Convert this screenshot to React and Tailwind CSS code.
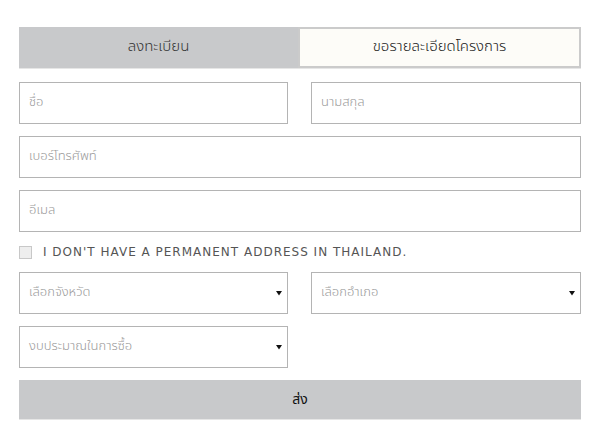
import React from "react";

const font = { fontFamily: '"Noto Sans Thai", "Noto Sans", "Liberation Sans", sans-serif' };

function Field({ label, className = "" }) {
  return (
    <div className={`h-[42px] border border-[#b4b4b4] bg-white flex items-center px-[9px] ${className}`}>
      <span className="text-[13px] font-light text-[#9a9a9a]">{label}</span>
    </div>
  );
}

function Select({ label, className = "" }) {
  return (
    <div className={`h-[42px] border border-[#b4b4b4] bg-white flex items-center justify-between pl-[9px] pr-[5px] ${className}`}>
      <span className="text-[13px] font-light text-[#9a9a9a]">{label}</span>
      <svg width="6" height="6" viewBox="0 0 6 6"><path d="M0 1h6L3 5.5z" fill="#111" /></svg>
    </div>
  );
}

export default function App() {
  return (
    <div className="w-[600px] h-[442px] bg-white pt-[27px] px-[19px]" style={font}>
      <div className="flex h-[42px] border-b border-[#e6e6e6]">
        <div className="flex-1 bg-[#c8c9cb] flex items-center justify-center text-[15px] font-light text-[#333]">ลงทะเบียน</div>
        <div className="flex-1 bg-[#fdfcf8] border-2 border-[#cbcbcb] flex items-center justify-center text-[15px] font-light text-[#222]">ขอรายละเอียดโครงการ</div>
      </div>
      <div className="mt-[13px] flex flex-col gap-[12px]">
        <div className="flex gap-[23px]">
          <Field label="ชื่อ" className="w-[269px]" />
          <Field label="นามสกุล" className="flex-1" />
        </div>
        <Field label="เบอร์โทรศัพท์" />
        <Field label="อีเมล" />
      </div>
      <div className="h-[40px] flex items-center gap-[11px]">
        <div className="w-[13px] h-[13px] border border-[#c8c8c8] bg-[#eeeeee]" />
        <span className="text-[12px] text-[#555] tracking-[1px]" style={{ fontFamily: '"DejaVu Sans", sans-serif' }}>
          I DON'T HAVE A PERMANENT ADDRESS IN THAILAND.
        </span>
      </div>
      <div className="flex flex-col gap-[12px]">
        <div className="flex gap-[23px]">
          <Select label="เลือกจังหวัด" className="w-[269px]" />
          <Select label="เลือกอำเภอ" className="flex-1" />
        </div>
        <Select label="งบประมาณในการซื้อ" className="w-[269px]" />
        <div className="h-[40px] bg-[#c8c9cb] border-b border-[#e6e6e6] flex items-center justify-center text-[14px] text-[#111]">ส่ง</div>
      </div>
    </div>
  );
}
